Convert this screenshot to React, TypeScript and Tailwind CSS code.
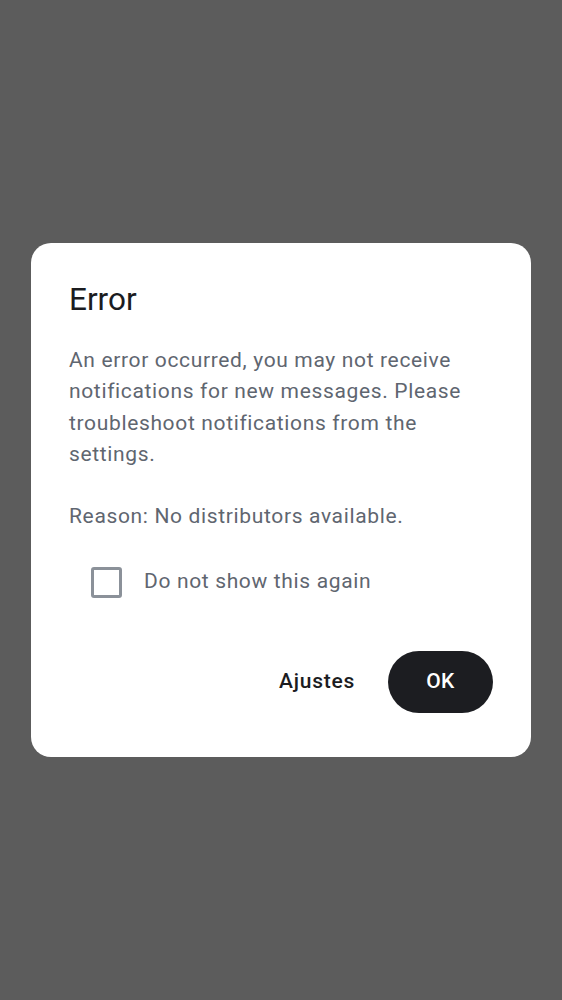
export default function App() {
  return (
    <div
      className="relative flex h-[1000px] w-[562px] flex-col bg-[#5c5c5c]"
      style={{ fontFamily: 'Roboto, "Noto Sans", sans-serif' }}
    >
      <div className="absolute left-[31px] top-[243px] w-[500px] rounded-[20px] bg-white px-[38px] pt-[36px] pb-[44px]">
        <h2 className="text-[31.5px] leading-[42px] text-[#1b1c1f]">Error</h2>
        <div className="mt-[24px] text-[21px] leading-[31.3px] tracking-[0.65px] text-[#5f6670]">
          <p>
            An error occurred, you may not receive notifications for new messages. Please troubleshoot
            notifications from the settings.
          </p>
          <p className="mt-[31px]">Reason: No distributors available.</p>
        </div>
        <label className="mt-[34px] ml-[22px] flex items-center gap-[22px]">
          <span className="h-[31px] w-[31px] rounded-[3px] border-[3px] border-[#8b9199]" />
          <span className="text-[21px] tracking-[0.65px] text-[#5f6670]">Do not show this again</span>
        </label>
        <div className="mt-[53px] flex items-center justify-end gap-[33px]">
          <button className="text-[21px] font-medium tracking-[0.75px] text-[#1b1c1f]">Ajustes</button>
          <button className="h-[62px] w-[105px] rounded-full bg-[#1c1d21] text-[21px] font-medium tracking-[0.5px] text-white">
            OK
          </button>
        </div>
      </div>
    </div>
  );
}
